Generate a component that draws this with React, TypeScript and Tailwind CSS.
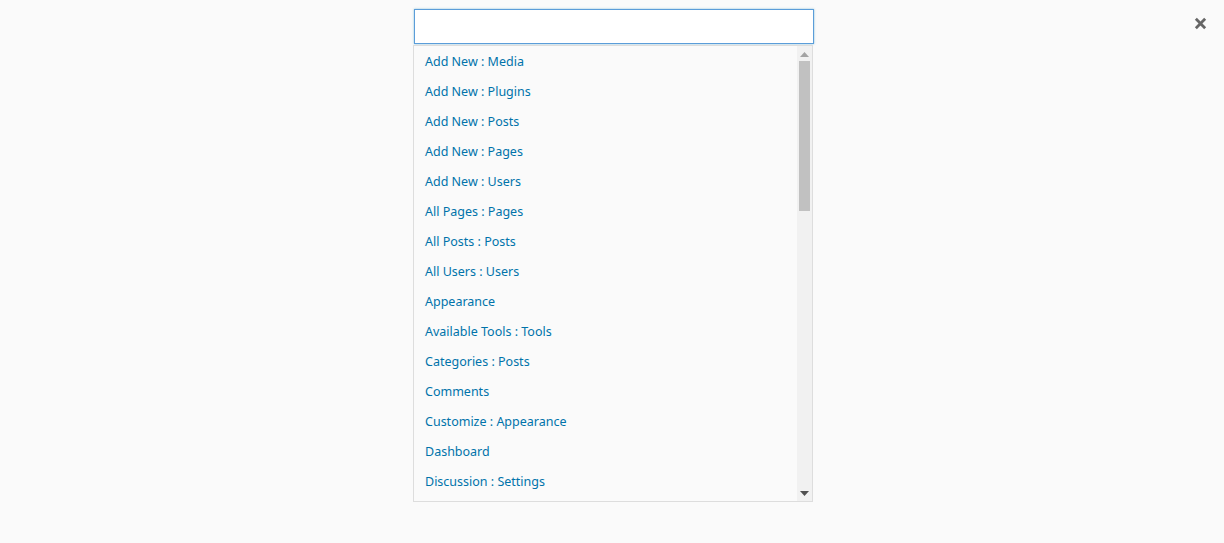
import React, { useState } from "react";

const pages = [
  "Add New : Media",
  "Add New : Plugins",
  "Add New : Posts",
  "Add New : Pages",
  "Add New : Users",
  "All Pages : Pages",
  "All Posts : Posts",
  "All Users : Users",
  "Appearance",
  "Available Tools : Tools",
  "Categories : Posts",
  "Comments",
  "Customize : Appearance",
  "Dashboard",
  "Discussion : Settings",
];

export default function App() {
  const [query, setQuery] = useState("");
  const results = pages.filter((p) =>
    p.toLowerCase().includes(query.toLowerCase())
  );

  return (
    <div
      className="relative h-[543px] w-full bg-[#fafafa] pl-[2px] pt-[9px]"
      style={{ fontFamily: '"Noto Sans", "Open Sans", sans-serif' }}
    >
      {/* close button */}
      <button className="absolute right-[17px] top-[16px] flex h-[14px] w-[14px] items-center justify-center text-[#666]">
        <svg viewBox="0 0 14 14" width="13" height="13">
          <path
            d="M2 2 L12 12 M12 2 L2 12"
            stroke="currentColor"
            strokeWidth="3"
          />
        </svg>
      </button>

      <div className="mx-auto flex w-[400px] flex-col">
        <input
          value={query}
          onChange={(e) => setQuery(e.target.value)}
          className="ml-[1px] h-[35px] w-[400px] border border-[#5b9dd9] bg-white px-2 text-[14px] text-[#32373c] outline-none shadow-[0_0_2px_rgba(30,140,190,0.5)]"
        />
        <div className="mt-[1px] flex h-[457px] w-[400px] border border-[#dddddd] bg-[#fafafa]">
          <ul className="flex-1 overflow-hidden pt-[1px]">
            {results.map((p) => (
              <li key={p}>
                <a
                  href="#"
                  className="block h-[30px] pl-[11px] text-[12.5px] leading-[30px] text-[#0073aa]"
                >
                  {p}
                </a>
              </li>
            ))}
          </ul>

          {/* scrollbar */}
          <div className="flex w-[15px] flex-col bg-[#f1f1f1]">
            <div className="flex h-[15px] items-center justify-center pt-[1px]">
              <svg width="9" height="5" viewBox="0 0 9 5">
                <path d="M4.5 0 L9 5 L0 5 Z" fill="#a3a3a3" />
              </svg>
            </div>
            <div className="flex-1">
              <div className="mx-[2px] h-[150px] bg-[#c1c1c1]" />
            </div>
            <div className="flex h-[15px] items-center justify-center">
              <svg width="9" height="5" viewBox="0 0 9 5">
                <path d="M0 0 L9 0 L4.5 5 Z" fill="#505050" />
              </svg>
            </div>
          </div>
        </div>
      </div>
    </div>
  );
}
